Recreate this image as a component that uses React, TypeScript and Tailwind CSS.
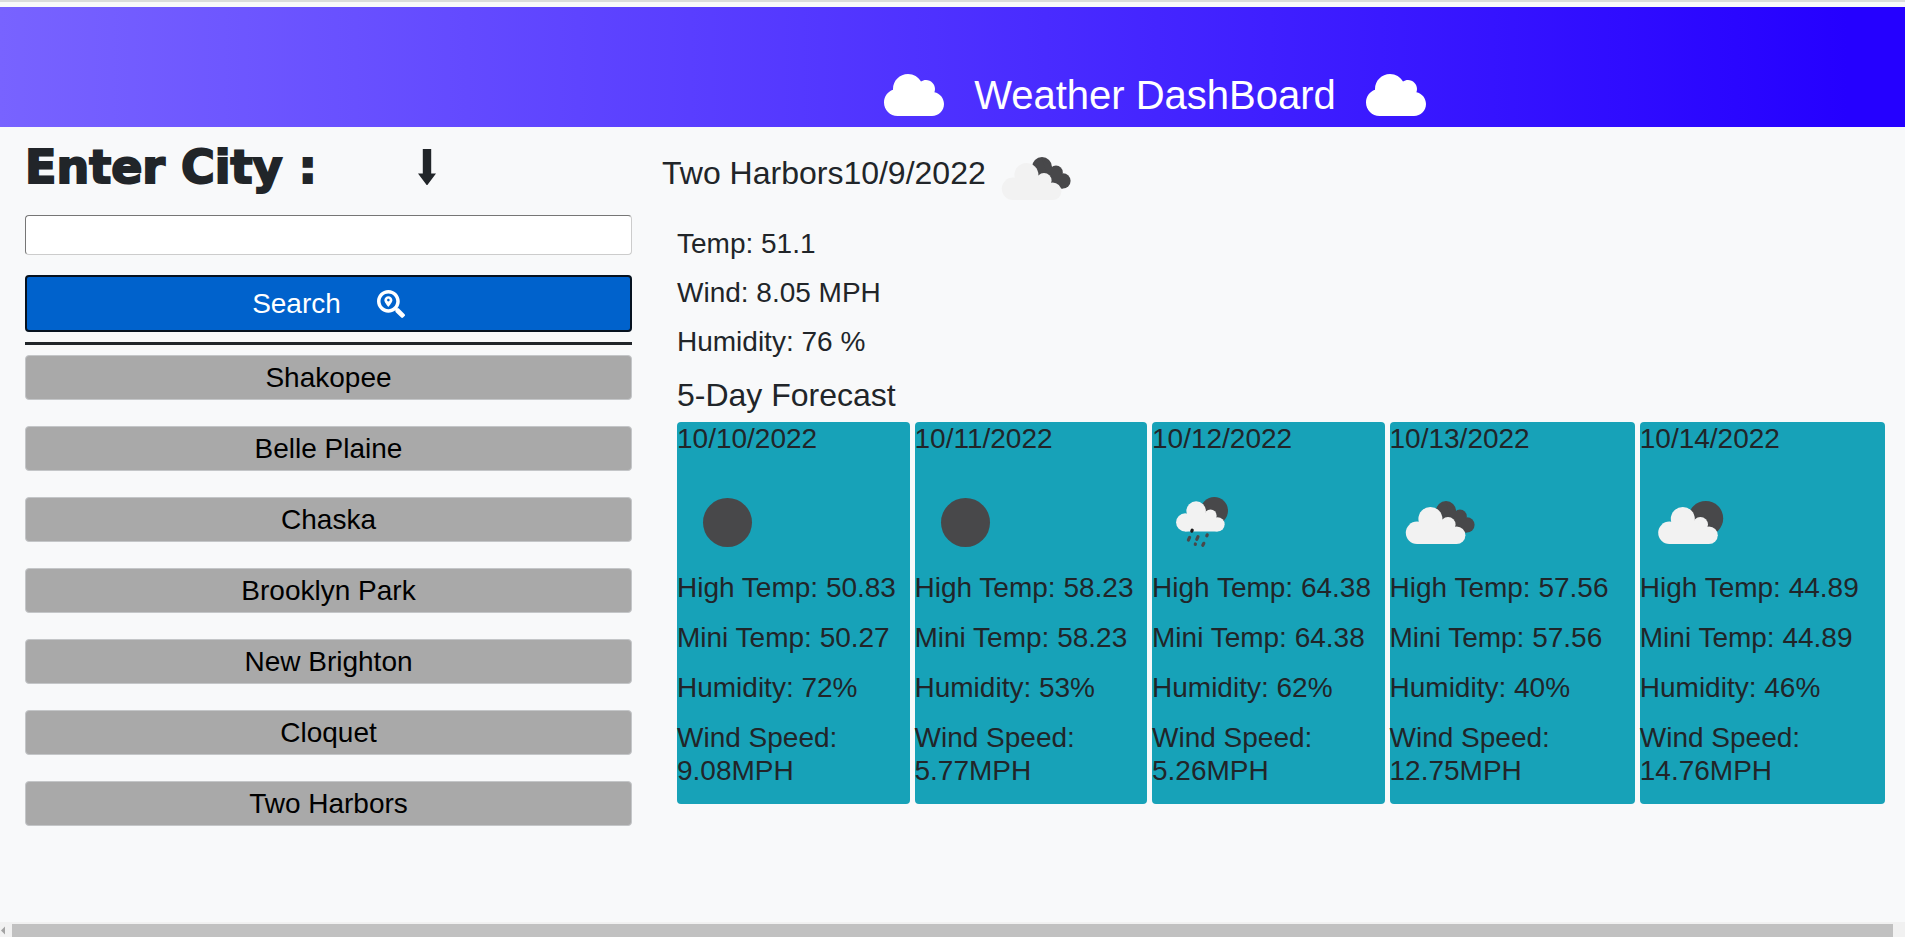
import { FaCloud, FaSearchLocation } from "react-icons/fa";

type Sky = "clear" | "rain" | "overcast" | "partly";

interface Day {
  date: string;
  sky: Sky;
  high: string;
  low: string;
  humidity: string;
  wind: string;
}

const cities = ["Shakopee", "Belle Plaine", "Chaska", "Brooklyn Park", "New Brighton", "Cloquet", "Two Harbors"];

const days: Day[] = [
  { date: "10/10/2022", sky: "clear", high: "50.83", low: "50.27", humidity: "72%", wind: "9.08MPH" },
  { date: "10/11/2022", sky: "clear", high: "58.23", low: "58.23", humidity: "53%", wind: "5.77MPH" },
  { date: "10/12/2022", sky: "rain", high: "64.38", low: "64.38", humidity: "62%", wind: "5.26MPH" },
  { date: "10/13/2022", sky: "overcast", high: "57.56", low: "57.56", humidity: "40%", wind: "12.75MPH" },
  { date: "10/14/2022", sky: "partly", high: "44.89", low: "44.89", humidity: "46%", wind: "14.76MPH" },
];

function FrontCloud() {
  return (
    <g fill="#f2f2f2">
      <circle cx="27" cy="61.8" r="11.2" />
      <circle cx="40.4" cy="48" r="12" />
      <circle cx="58" cy="53.6" r="7.6" />
      <circle cx="66.6" cy="64.2" r="8.8" />
      <path d="M27 73V57L38 50L58 53L66.600 60V73z" />
    </g>
  );
}

function RearCloud() {
  return (
    <g fill="#48484a">
      <circle cx="56" cy="40" r="10" />
      <circle cx="70" cy="45.2" r="6.8" />
      <circle cx="77" cy="53.8" r="7.6" />
      <path d="M56 32L66 40L74 44L77 50V61.400H66z" />
    </g>
  );
}

function SkyIcon({ sky }: { sky: Sky }) {
  return (
    <svg viewBox="0 0 100 100" className="size-[100px] shrink-0" aria-hidden="true">
      {sky === "clear" && <circle cx="50.5" cy="51.5" r="24.5" fill="#48484a" />}
      {sky === "overcast" && (
        <>
          <RearCloud />
          <FrontCloud />
        </>
      )}
      {sky === "partly" && (
        <>
          <circle cx="65.8" cy="47.4" r="17.4" fill="#48484a" />
          <g transform="translate(2.4 0)">
            <FrontCloud />
          </g>
        </>
      )}
      {sky === "rain" && (
        <>
          <circle cx="62.3" cy="39.7" r="13.7" fill="#48484a" />
          <g transform="translate(11.2 1) scale(0.815)">
            <FrontCloud />
          </g>
          <g stroke="#48484a" strokeWidth="3.2" strokeLinecap="round">
            <path d="M40.200 59.200l-.4 1" stroke="#1b1b1c" />
            <path d="M37.600 66.400l-1.200 2.600M46 65.700l-1.200 2.600M55.200 63.800l-.4 1M43.400 73l-.1 .4M51.800 72.300l-1 2" />
          </g>
        </>
      )}
    </svg>
  );
}

function DayCard({ day }: { day: Day }) {
  return (
    <article className="flex-initial rounded bg-[#17a2b8] pb-[17px]">
      <h3 className="mb-4">{day.date}</h3>
      <SkyIcon sky={day.sky} />
      <div className="flex flex-col gap-[17px]">
        <p>High Temp: {day.high}</p>
        <p>Mini Temp: {day.low}</p>
        <p>Humidity: {day.humidity}</p>
        <p>Wind Speed: {day.wind}</p>
      </div>
    </article>
  );
}

export default function App() {
  return (
    <div className="flex min-h-screen flex-col bg-[#f8f9fa] font-['Liberation_Sans',Arial,sans-serif] text-[28px] leading-[33px] text-[#212529]">
      <div className="h-[7px] border-b-[5px] border-[#f8f9fa] bg-[#dadcdb]" />
      <header className="flex h-[120px] items-end justify-center gap-[30px] bg-linear-to-r/srgb from-[#7863ff] to-[#2500ff] to-97% pb-[8px] pl-[405px] text-white">
        <FaCloud className="h-12 w-15" aria-hidden="true" />
        <h1 className="text-[40px] leading-[48px]">Weather DashBoard</h1>
        <FaCloud className="h-12 w-15" aria-hidden="true" />
      </header>

      <main className="flex grow">
        <section className="flex w-1/3 shrink-0 flex-col pt-[11px] pr-[3px] pl-[25px]">
          <label
            htmlFor="city"
            className="flex items-center gap-[101px] font-['Arial_Black','DejaVu_Sans',sans-serif] text-[46px] leading-[58px] font-black [-webkit-text-stroke:2px_currentColor]"
          >
            Enter City :
            <svg viewBox="0 0 18 36" className="h-9 w-[18px]" fill="currentColor" aria-hidden="true">
              <path d="M4.800 0h8.400v24.500H18L9 36.500L0 24.500h4.800z" />
            </svg>
          </label>
          <input
            id="city"
            type="text"
            className="mt-[19px] h-10 rounded border border-t-[#767676] border-r-[#cccccc] border-b-[#cccccc] border-l-[#767676] bg-white px-2"
          />
          <button className="mt-5 flex h-[57px] items-center justify-center gap-9 rounded border-2 border-[#06121f] bg-[#0062cc] text-white">
            Search
            <FaSearchLocation className="size-7" aria-hidden="true" />
          </button>
          <hr className="mt-[10px] border-t-[3px] border-[#212529]" />
          <div className="mt-[10px] flex flex-col gap-[26px]">
            {cities.map((city) => (
              <button key={city} className="h-[45px] rounded-sm border border-[#c4c6c8] bg-[#a9a9a9] text-black">
                {city}
              </button>
            ))}
          </div>
        </section>

        <section className="min-w-0 grow pr-5 pl-[27px]">
          <div className="flex items-center">
            <h2 className="pb-2 text-[32px] leading-[38px]">Two Harbors10/9/2022</h2>
            <SkyIcon sky="overcast" />
          </div>
          <div className="pl-[15px]">
            <div className="flex flex-col gap-4">
              <p>Temp: 51.1</p>
              <p>Wind: 8.05 MPH</p>
              <p>Humidity: 76 %</p>
            </div>
            <h2 className="mt-[18px] mb-2 text-[32px] leading-[38px]">5-Day Forecast</h2>
            <div className="flex gap-[5px]">
              {days.map((day) => (
                <DayCard key={day.date} day={day} />
              ))}
            </div>
          </div>
        </section>
      </main>

      <div className="flex h-[15px] items-end bg-[#f1f1f1]" aria-hidden="true">
        <svg viewBox="0 0 12 13" className="h-[13px] w-3" fill="#a3a3a3">
          <path d="M5 2.500v8L1 6.500z" />
        </svg>
        <div className="mr-3 h-[13px] grow bg-[#c1c1c1]" />
      </div>
    </div>
  );
}
